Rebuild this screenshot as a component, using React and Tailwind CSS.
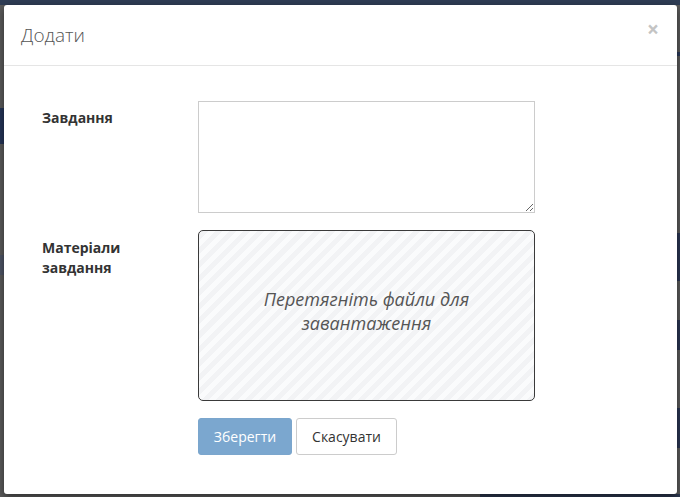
import React from 'react';

// Dimmed page strips peeking out around the modal
const Backdrop = () => (
  <div className="absolute inset-0">
    <div className="h-[5px] bg-[#2f3d55]" />
    <div className="absolute left-0 top-[108px] h-[36px] w-[4px] bg-[#253558]" />
    <div className="absolute left-0 top-[255px] h-[20px] w-[4px] bg-[#4e5566]" />
    <div className="absolute right-0 top-[52px] h-[4px] w-[3px] bg-[#2b3a5a]" />
    <div className="absolute right-0 top-[233px] h-[48px] w-[3px] bg-[#2b3654]" />
    <div className="absolute right-0 top-[320px] h-[30px] w-[3px] bg-[#2b3654]" />
    <div className="absolute right-0 top-[408px] h-[40px] w-[3px] bg-[#2b3654]" />
    <div className="absolute right-0 bottom-0 h-[3px] w-[200px] bg-[#2d3850]" />
  </div>
);

export default function App() {
  return (
    <div className="relative h-[497px] w-[680px] overflow-hidden bg-[#5b5b5b] font-['Open_Sans',sans-serif]">
      <Backdrop />

      <div className="relative ml-[4px] mt-[5px] h-[489px] w-[673px] rounded-[3px] bg-white shadow-[0_3px_9px_rgba(0,0,0,0.5)]">
        {/* Header */}
        <div className="flex h-[61px] items-center justify-between border-b border-[#e5e5e5] pl-[17px] pr-[18px]">
          <h4 className="text-[19px] font-light leading-none text-[#555]">Додати</h4>
          <button className="-mt-[12px] text-[21px] font-bold leading-none text-[#c4c4c4]">×</button>
        </div>

        {/* Body */}
        <div className="pl-[38px] pt-[35px]">
          <div className="flex">
            <label className="w-[156px] pt-[7px] text-[14px] font-bold leading-[20px] text-[#333]">Завдання</label>
            <textarea className="h-[112px] w-[337px] border border-[#ccc] bg-white text-[14px] text-[#555] outline-none" />
          </div>

          <div className="mt-[17px] flex">
            <label className="w-[156px] pt-[8px] text-[14px] font-bold leading-[20px] text-[#333]">
              Матеріали
              <br />
              завдання
            </label>
            <div className="flex h-[171px] w-[337px] items-center justify-center rounded-[5px] border border-[#3a3a3a] bg-[repeating-linear-gradient(-45deg,#f2f3f5_0px,#f2f3f5_5px,#fafbfc_5px,#fafbfc_10px)] pb-[10px]">
              <p className="text-center text-[18px] italic leading-[24px] text-[#555]">
                Перетягніть файли для
                <br />
                завантаження
              </p>
            </div>
          </div>

          <div className="mt-[17px] flex gap-[4px] pl-[156px]">
            <button className="h-[37px] w-[94px] rounded-[3px] border border-[#7ba6cd] bg-[#7ba7cf] text-[14px] text-white">
              Зберегти
            </button>
            <button className="h-[37px] w-[101px] rounded-[3px] border border-[#ccc] bg-white text-[14px] text-[#333]">
              Скасувати
            </button>
          </div>
        </div>
      </div>
    </div>
  );
}
